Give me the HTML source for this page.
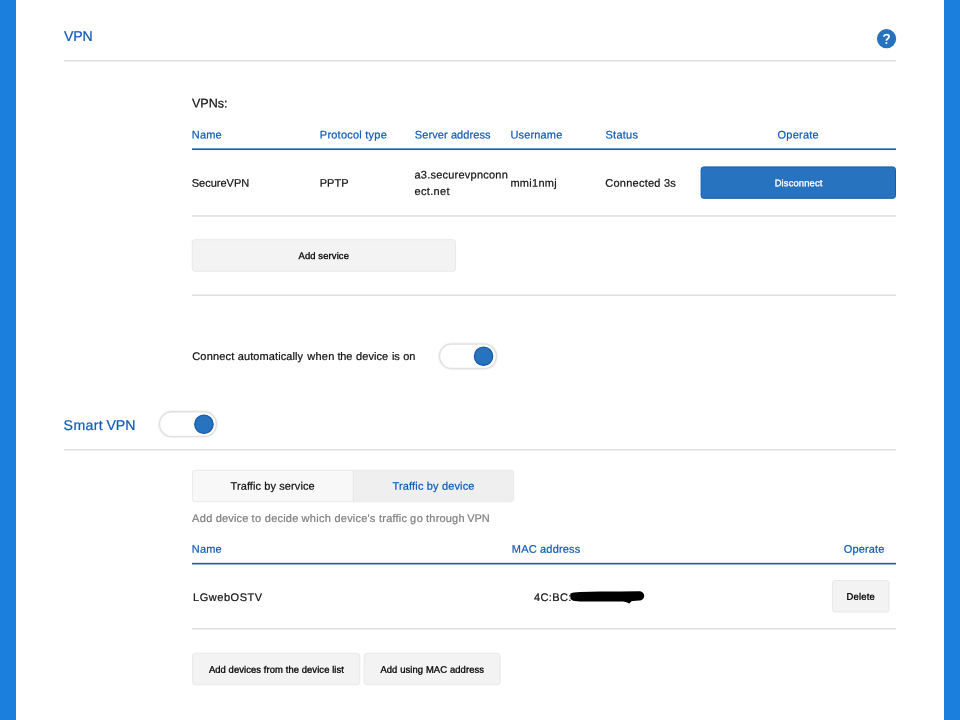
<!DOCTYPE html>
<html lang="en">
<head>
<meta charset="utf-8">
<title>VPN</title>
<style>
html,body{margin:0;padding:0;}
body{width:960px;height:720px;position:relative;overflow:hidden;background:#ffffff;font-family:"Liberation Sans",sans-serif;}
.abs,.t{position:absolute;}
.t{white-space:pre;line-height:20px;height:20px;-webkit-text-stroke:0.23px currentColor;}
.bar{position:absolute;top:0;width:16px;height:720px;background:#1a7fdd;}
</style>
</head>
<body>

<div class="bar" style="left:0"></div>
<div class="bar" style="left:944px"></div>

<!-- rules (fractional, antialiased) -->
<svg class="abs" style="left:0;top:0" width="960" height="720" viewBox="0 0 960 720">
  <g fill="#e0e0e0">
    <rect x="64" y="60.0" width="832" height="1.55"/>
    <rect x="192" y="215.15" width="704" height="1.6"/>
    <rect x="192" y="294.4" width="704" height="1.6"/>
    <rect x="64" y="449.0" width="832" height="1.55"/>
    <rect x="192" y="628.0" width="704" height="1.55"/>
  </g>
  <g fill="#0e5bb5">
    <rect x="192" y="148.4" width="704" height="1.6"/>
    <rect x="192" y="562.85" width="704" height="1.6"/>
  </g>
</svg>

<!-- boxes (fractional, antialiased) -->
<svg class="abs" style="left:0;top:0" width="960" height="720" viewBox="0 0 960 720">
  <rect x="701.10" y="166.90" width="194.40" height="31.40" rx="2.6" fill="#2773c0" stroke="#165cae" stroke-width="1.0"/>
  <rect x="192.23" y="239.68" width="263.35" height="31.55" rx="2.6" fill="#f3f3f3" stroke="#e5e5e5" stroke-width="0.85"/>
  <rect x="192.43" y="470.23" width="321.15" height="31.55" rx="2.6" fill="#f8f8f8" stroke="#e6e6e6" stroke-width="0.85"/>
  <path d="M353.2 470.65 H511.4 Q513.15 470.65 513.15 472.4 V499.6 Q513.15 501.35 511.4 501.35 H353.2 Z" fill="#efefef"/>
  <rect x="352.8" y="470.6" width="0.85" height="30.8" fill="#e4e4e4"/>
  <rect x="832.42" y="580.52" width="56.65" height="31.55" rx="2.6" fill="#f3f3f3" stroke="#e5e5e5" stroke-width="0.85"/>
  <rect x="192.62" y="653.22" width="167.25" height="31.55" rx="3.0" fill="#f3f3f3" stroke="#e5e5e5" stroke-width="0.85"/>
  <rect x="364.12" y="653.22" width="136.05" height="31.55" rx="3.0" fill="#f3f3f3" stroke="#e5e5e5" stroke-width="0.85"/>
</svg>

<!-- help icon -->
<svg class="abs" style="left:876px;top:28px" width="21" height="22" viewBox="0 0 21 22">
  <circle cx="10.55" cy="10.7" r="9.65" fill="#2672bf"/>
  <path d="M8.0 8.7 C8.0 7.4 9.0 6.6 10.5 6.6 C12.0 6.6 13.1 7.4 13.1 8.6 C13.1 9.7 12.4 10.2 11.6 10.8 C10.8 11.4 10.4 11.8 10.4 12.8" fill="none" stroke="#ffffff" stroke-width="1.75" stroke-linecap="butt" stroke-linejoin="round"/>
  <circle cx="10.35" cy="14.95" r="1.0" fill="#ffffff"/>
</svg>

<!-- toggles -->
<svg class="abs" style="left:0;top:0" width="960" height="720" viewBox="0 0 960 720">
  <g id="tg1">
    <rect x="438.3" y="342.9" width="59.2" height="26.8" rx="13.4" fill="none" stroke="#000" stroke-opacity="0.035" stroke-width="1.2"/>
    <rect x="439.5" y="344.05" width="56.9" height="24.5" rx="12.25" fill="#ffffff" stroke="#e1e1e1" stroke-width="1.5"/>
    <circle cx="483.55" cy="356.25" r="9.15" fill="#2873c0" stroke="#175cad" stroke-width="1.3"/>
  </g>
  <g id="tg2">
    <rect x="158.3" y="410.7" width="59.2" height="27.0" rx="13.5" fill="none" stroke="#000" stroke-opacity="0.035" stroke-width="1.2"/>
    <rect x="159.5" y="411.85" width="56.9" height="24.7" rx="12.35" fill="#ffffff" stroke="#e1e1e1" stroke-width="1.5"/>
    <circle cx="203.95" cy="424.25" r="9.2" fill="#2873c0" stroke="#175cad" stroke-width="1.3"/>
  </g>
</svg>


<!-- text -->
<div id="txt" style="position:absolute;left:0;top:0;width:960px;height:720px;will-change:transform">
<span class="t" style="left:63px;top:26px;font-size:14.14px;letter-spacing:-0.12px;color:#0f5cb8;transform:translate(0.95px,0.10px) rotate(0.03deg);">VPN</span>
<span class="t" style="left:192px;top:93px;font-size:12.57px;letter-spacing:-0.045px;color:#141414;transform:translate(0.03px,0.40px) rotate(0.03deg);">VPNs:</span>
<span class="t" style="left:191px;top:124px;font-size:11.0px;letter-spacing:0.132px;color:#0f5cb8;transform:translate(0.81px,0.40px) rotate(0.03deg);">Name</span>
<span class="t" style="left:319px;top:124px;font-size:11.0px;letter-spacing:0.232px;color:#0f5cb8;transform:translate(0.81px,0.40px) rotate(0.03deg);">Protocol type</span>
<span class="t" style="left:414px;top:124px;font-size:11.0px;letter-spacing:0.092px;color:#0f5cb8;transform:translate(0.81px,0.40px) rotate(0.03deg);">Server address</span>
<span class="t" style="left:510px;top:124px;font-size:11.0px;letter-spacing:0.149px;color:#0f5cb8;transform:translate(0.50px,0.40px) rotate(0.03deg);">Username</span>
<span class="t" style="left:605px;top:124px;font-size:11.0px;letter-spacing:0.261px;color:#0f5cb8;transform:translate(0.50px,0.40px) rotate(0.03deg);">Status</span>
<span class="t" style="left:777px;top:124px;font-size:11.0px;letter-spacing:0.248px;color:#0f5cb8;transform:translate(0.48px,0.40px) rotate(0.03deg);">Operate</span>
<span class="t" style="left:191px;top:172px;font-size:11.0px;letter-spacing:0.001px;color:#141414;transform:translate(0.70px,0.70px) rotate(0.03deg);">SecureVPN</span>
<span class="t" style="left:319px;top:172px;font-size:11.0px;letter-spacing:0.019px;color:#141414;transform:translate(0.70px,0.70px) rotate(0.03deg);">PPTP</span>
<span class="t" style="left:414px;top:164px;font-size:11.0px;letter-spacing:0.226px;color:#141414;transform:translate(0.50px,0.40px) rotate(0.03deg);">a3.securevpnconn</span>
<span class="t" style="left:414px;top:181px;font-size:11.0px;letter-spacing:0.326px;color:#141414;transform:translate(0.50px,0.10px) rotate(0.03deg);">ect.net</span>
<span class="t" style="left:510px;top:172px;font-size:11.0px;letter-spacing:0.277px;color:#141414;transform:translate(0.40px,0.70px) rotate(0.03deg);">mmi1nmj</span>
<span class="t" style="left:605px;top:172px;font-size:11.0px;letter-spacing:0.236px;color:#141414;transform:translate(0.30px,0.70px) rotate(0.03deg);">Connected 3s</span>
<span class="t" style="left:774px;top:173px;font-size:9.43px;letter-spacing:0.127px;color:#ffffff;transform:translate(0.67px,0.20px) rotate(0.03deg);-webkit-text-stroke:0.3px currentColor;">Disconnect</span>
<span class="t" style="left:298px;top:245px;font-size:9.43px;letter-spacing:0.121px;color:#000000;transform:translate(0.48px,0.90px) rotate(0.03deg);-webkit-text-stroke:0.3px currentColor;">Add service</span>
<span class="t" style="left:63px;top:415px;font-size:14.14px;letter-spacing:0.363px;color:#0f5cb8;transform:translate(0.61px,0.10px) rotate(0.03deg);">Smart</span>
<span class="t" style="left:106px;top:415px;font-size:14.14px;letter-spacing:-0.12px;color:#0f5cb8;transform:translate(0.55px,0.10px) rotate(0.03deg);">VPN</span>
<span class="t" style="left:230px;top:475px;font-size:11.0px;letter-spacing:0.098px;color:#141414;transform:translate(0.50px,0.80px) rotate(0.03deg);">Traffic by service</span>
<span class="t" style="left:392px;top:475px;font-size:11.0px;letter-spacing:0.157px;color:#0f5cb8;transform:translate(0.50px,0.80px) rotate(0.03deg);">Traffic by device</span>
<span class="t" style="left:191px;top:538px;font-size:11.0px;letter-spacing:0.132px;color:#0f5cb8;transform:translate(0.81px,0.80px) rotate(0.03deg);">Name</span>
<span class="t" style="left:511px;top:538px;font-size:11.0px;letter-spacing:0.185px;color:#0f5cb8;transform:translate(0.80px,0.80px) rotate(0.03deg);">MAC address</span>
<span class="t" style="left:843px;top:538px;font-size:11.0px;letter-spacing:0.165px;color:#0f5cb8;transform:translate(0.70px,0.80px) rotate(0.03deg);">Operate</span>
<span class="t" style="left:193px;top:587px;font-size:11.0px;letter-spacing:0.547px;color:#141414;transform:translate(0.00px,0.10px) rotate(0.03deg);">LGwebOSTV</span>
<span class="t" style="left:534px;top:587px;font-size:11.0px;letter-spacing:0.384px;color:#141414;transform:translate(0.00px,0.10px) rotate(0.03deg);">4C:BC:</span>
<span class="t" style="left:846px;top:586px;font-size:9.43px;letter-spacing:0.16px;color:#000000;transform:translate(0.62px,0.80px) rotate(0.03deg);-webkit-text-stroke:0.3px currentColor;">Delete</span>
<span class="t" style="left:208px;top:659px;font-size:9.43px;letter-spacing:0.082px;color:#000000;transform:translate(0.88px,0.70px) rotate(0.03deg);-webkit-text-stroke:0.3px currentColor;">Add devices from the device list</span>
<span class="t" style="left:380px;top:659px;font-size:9.43px;letter-spacing:0.102px;color:#000000;transform:translate(0.38px,0.70px) rotate(0.03deg);-webkit-text-stroke:0.3px currentColor;">Add using MAC address</span>
<span class="t" style="left:192px;top:346px;font-size:11.0px;letter-spacing:0.184px;color:#141414;transform:translate(0.21px,0.00px) rotate(0.03deg);">Connect</span>
<span class="t" style="left:237px;top:346px;font-size:11.0px;letter-spacing:0.086px;color:#141414;transform:translate(0.81px,0.00px) rotate(0.03deg);">automatically</span>
<span class="t" style="left:307px;top:346px;font-size:11.0px;letter-spacing:0.231px;color:#141414;transform:translate(0.31px,0.00px) rotate(0.03deg);">when</span>
<span class="t" style="left:337px;top:346px;font-size:11.0px;letter-spacing:-0.12px;color:#141414;transform:translate(0.42px,0.00px) rotate(0.03deg);">the</span>
<span class="t" style="left:356px;top:346px;font-size:11.0px;letter-spacing:0.069px;color:#141414;transform:translate(0.06px,0.00px) rotate(0.03deg);">device</span>
<span class="t" style="left:391px;top:346px;font-size:11.0px;letter-spacing:-0.12px;color:#141414;transform:translate(0.88px,0.00px) rotate(0.03deg);">is</span>
<span class="t" style="left:403px;top:346px;font-size:11.0px;letter-spacing:-0.12px;color:#141414;transform:translate(0.24px,0.00px) rotate(0.03deg);">on</span>
<span class="t" style="left:192px;top:507px;font-size:11.0px;letter-spacing:0.42px;color:#828282;transform:translate(0.04px,0.90px) rotate(0.03deg);">Add</span>
<span class="t" style="left:215px;top:507px;font-size:11.0px;letter-spacing:0.139px;color:#828282;transform:translate(0.81px,0.90px) rotate(0.03deg);">device</span>
<span class="t" style="left:251px;top:507px;font-size:11.0px;letter-spacing:0.303px;color:#828282;transform:translate(0.61px,0.90px) rotate(0.03deg);">to</span>
<span class="t" style="left:264px;top:507px;font-size:11.0px;letter-spacing:0.214px;color:#828282;transform:translate(0.81px,0.90px) rotate(0.03deg);">decide</span>
<span class="t" style="left:301px;top:507px;font-size:11.0px;letter-spacing:0.291px;color:#828282;transform:translate(0.50px,0.90px) rotate(0.03deg);">which</span>
<span class="t" style="left:334px;top:507px;font-size:11.0px;letter-spacing:0.198px;color:#828282;transform:translate(0.50px,0.90px) rotate(0.03deg);">device's</span>
<span class="t" style="left:379px;top:507px;font-size:11.0px;letter-spacing:0.214px;color:#828282;transform:translate(0.00px,0.90px) rotate(0.03deg);">traffic</span>
<span class="t" style="left:410px;top:507px;font-size:11.0px;letter-spacing:0.42px;color:#828282;transform:translate(0.12px,0.90px) rotate(0.03deg);">go</span>
<span class="t" style="left:426px;top:507px;font-size:11.0px;letter-spacing:0.18px;color:#828282;transform:translate(0.11px,0.90px) rotate(0.03deg);">through</span>
<span class="t" style="left:467px;top:507px;font-size:11.0px;letter-spacing:-0.12px;color:#828282;transform:translate(0.26px,0.90px) rotate(0.03deg);">VPN</span>
</div>
<!-- redaction scribble (above text) -->
<svg class="abs" style="left:560px;top:582px" width="96" height="30" viewBox="0 0 96 30">
  <path d="M10.3 12.3 C10.4 11.4 11.8 10.9 14 10.6 L20 10.0 L40 9.6 L60 9.4 L78 9.2 C82 9.0 84.2 11.2 84.2 13.8 C84.2 16.6 82 18.5 79 18.6 L73 18.9 L71.5 19.2 L69.3 21.5 L66.5 20.3 L63 19.6 L40 19.6 L20 19.4 L15 19.0 C12.6 18.6 10.7 17.6 10.4 16.4 Z" fill="#000000"/>
</svg>
</body>
</html>
